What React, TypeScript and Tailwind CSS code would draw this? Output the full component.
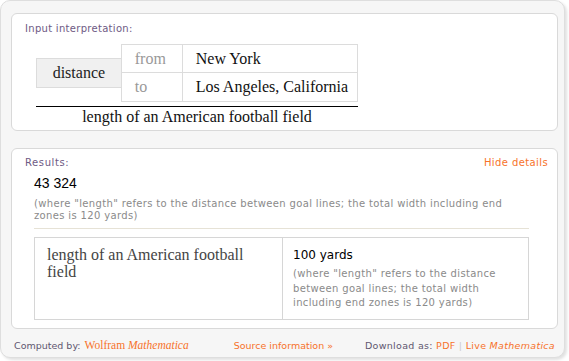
const sans = "font-['DejaVu_Sans',Verdana,sans-serif]";
const serif = "font-['Liberation_Serif','Times_New_Roman',serif]";

const Note = ({ children, className = "" }: { children: React.ReactNode; className?: string }) => (
  <p className={`${sans} text-[10px] tracking-[0.35px] text-[#8a8a8a] ${className}`}>{children}</p>
);

export default function App() {
  return (
    <div className="w-[569px] h-[361px] bg-white">
      <div className="w-[565px] h-[358px] rounded-[10px] border border-[#dedede] bg-[#f6f6f6] shadow-[2px_2px_3px_rgba(0,0,0,0.12)] pl-[10px] pr-[6px] pt-[12px]">
        {/* input interpretation pod */}
        <div className="h-[118px] rounded-[6px] border border-[#d9d9d9] bg-white pl-[13px] pt-[8px]">
          <p className={`${sans} text-[10px] leading-[13px] tracking-[0.3px] text-[#6e5a84]`}>Input interpretation:</p>
          <div className="ml-[11px] mt-[9px] w-[322px]">
            <div className="flex items-center">
              <div className={`${serif} w-[85px] h-[30px] flex items-center justify-center border border-r-0 border-[#dcdcdc] bg-[#f0f0f0] text-[16px] text-[#222]`}>
                distance
              </div>
              <div className={`${serif} w-[238px] border border-[#dcdcdc] text-[16px]`}>
                <div className="flex h-[28px] border-b border-[#dcdcdc]">
                  <div className="w-[61px] border-r border-[#dcdcdc] pl-[13px] flex items-center text-[#999]">from</div>
                  <div className="flex-1 pl-[13px] flex items-center text-[#111]">New York</div>
                </div>
                <div className="flex h-[28px]">
                  <div className="w-[61px] border-r border-[#dcdcdc] pl-[13px] flex items-center text-[#999]">to</div>
                  <div className="flex-1 pl-[13px] flex items-center text-[#111]">Los Angeles, California</div>
                </div>
              </div>
            </div>
            <div className="mt-[4px] border-t border-black" />
            <p className={`${serif} text-center text-[16px] leading-[19px] text-[#111]`}>length of an American football field</p>
          </div>
        </div>

        {/* results pod */}
        <div className="mt-[17px] h-[181px] rounded-[6px] border border-[#d9d9d9] bg-white pl-[13px] pr-[9px] pt-[7px]">
          <div className={`${sans} flex justify-between text-[10px] leading-[13px]`}>
            <span className="text-[#6e5a84] tracking-[0.6px]">Results:</span>
            <span className="text-[#f7722a] tracking-[0.4px]">Hide details</span>
          </div>
          <div className="pl-[9px] pr-[19px]">
            <p className="font-['Liberation_Sans',Arial,sans-serif] mt-[6px] text-[14px] leading-[16px] text-black">43 324</p>
            <Note className="mt-[7px] leading-[12px]">
              (where "length" refers to the distance between goal lines; the total width including end zones is 120 yards)
            </Note>
            <div className="mt-[6px] border-t border-[#e6e2d6]" />
            <div className="mt-[8px] flex h-[83px] border border-[#d6d6d6]">
              <div className={`${serif} w-[248px] border-r border-[#d6d6d6] pl-[12px] pr-[20px] pt-[8px] text-[16px] leading-[17px] text-[#444]`}>
                length of an American football field
              </div>
              <div className="flex-1 pl-[10px] pt-[9px]">
                <p className={`${sans} text-[12px] leading-[16px] text-black`}>100 yards</p>
                <Note className="mt-[4px] pr-[8px] leading-[14.5px]">
                  (where "length" refers to the distance between goal lines; the total width including end zones is 120 yards)
                </Note>
              </div>
            </div>
          </div>
        </div>

        {/* footer */}
        <div className={`${sans} mt-[10px] flex items-center whitespace-nowrap text-[9.5px] leading-[13px] pl-[3px]`}>
          <span className="text-[#5f5670]">Computed by:</span>
          <span className={`${serif} ml-[4px] text-[11.5px] text-[#f7722a]`}>
            Wolfram <i>Mathematica</i>
          </span>
          <span className="ml-[45px] text-[#f7722a]">Source information »</span>
          <span className="ml-auto mr-[3px] tracking-[0.3px]">
            <span className="text-[#5f5670]">Download as: </span>
            <span className="text-[#f7722a]">PDF</span>
            <span className="text-[#ccc]"> | </span>
            <span className="text-[#f7722a]">Live <i>Mathematica</i></span>
          </span>
        </div>
      </div>
    </div>
  );
}
